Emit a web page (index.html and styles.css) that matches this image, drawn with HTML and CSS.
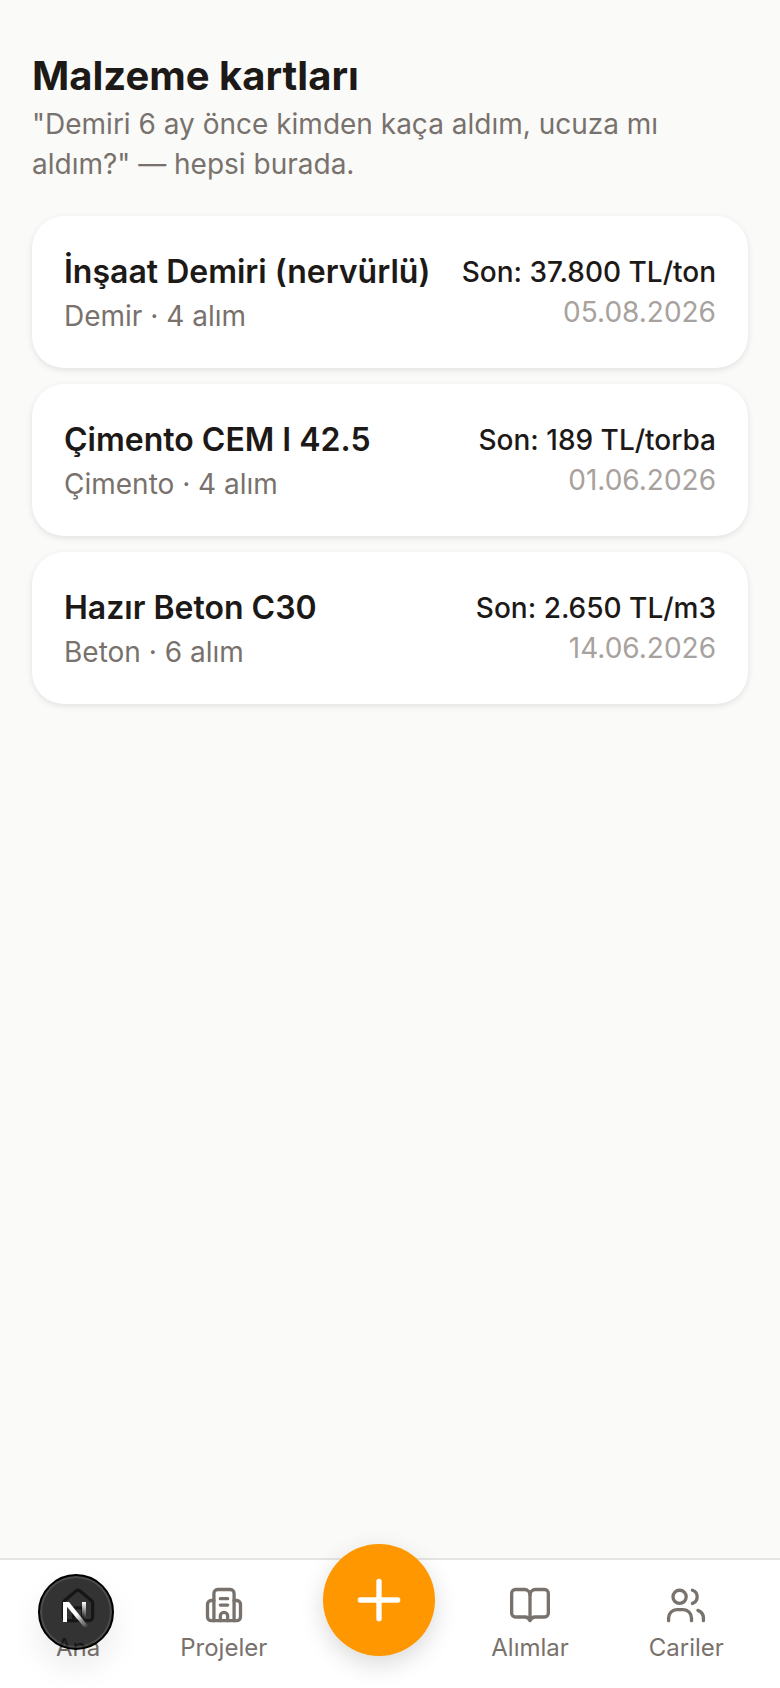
FILE: index.html
```html
<!DOCTYPE html>
<html lang="tr">
<head>
  <meta charset="UTF-8">
  <title>Malzeme kartları</title>
  <meta name="viewport" content="width=device-width, initial-scale=1.0">
  <link rel="stylesheet" href="styles.css">
</head>
<body>
<main class="page">
  <h1 class="page-title">Malzeme kartları</h1>
  <p class="page-sub">"Demiri 6 ay önce kimden kaça aldım, ucuza mı aldım?" — hepsi burada.</p>

  <div class="card-list">
    <a class="card">
      <div>
        <div class="card-name">İnşaat Demiri (nervürlü)</div>
        <div class="card-meta">Demir · 4 alım</div>
      </div>
      <div class="card-right">
        <div class="card-price">Son: 37.800 TL/ton</div>
        <div class="card-date">05.08.2026</div>
      </div>
    </a>
    <a class="card">
      <div>
        <div class="card-name">Çimento CEM I 42.5</div>
        <div class="card-meta">Çimento · 4 alım</div>
      </div>
      <div class="card-right">
        <div class="card-price">Son: 189 TL/torba</div>
        <div class="card-date">01.06.2026</div>
      </div>
    </a>
    <a class="card">
      <div>
        <div class="card-name">Hazır Beton C30</div>
        <div class="card-meta">Beton · 6 alım</div>
      </div>
      <div class="card-right">
        <div class="card-price">Son: 2.650 TL/m3</div>
        <div class="card-date">14.06.2026</div>
      </div>
    </a>
  </div>
</main>

<nav class="tabbar">
  <a class="tab">
    <svg class="tab-icon" viewBox="0 0 24 24"><path d="M4 10.5a2 2 0 0 1 .7-1.5l6-5a2 2 0 0 1 2.6 0l6 5a2 2 0 0 1 .7 1.5V18a2 2 0 0 1-2 2H6a2 2 0 0 1-2-2z"/><path d="M9.5 20v-6a1 1 0 0 1 1-1h3a1 1 0 0 1 1 1v6"/></svg>
    <span>Ana</span>
  </a>
  <a class="tab">
    <svg class="tab-icon" viewBox="0 0 24 24"><path d="M6.5 20V5a2 2 0 0 1 2-2h7a2 2 0 0 1 2 2v15"/><path d="M6.5 9H5a2 2 0 0 0-2 2v7a2 2 0 0 0 2 2h14a2 2 0 0 0 2-2v-7a2 2 0 0 0-2-2h-1.5"/><path d="M10 8h4"/><path d="M10 11.5h4"/><path d="M10 20v-2.5a2 2 0 0 1 4 0V20"/></svg>
    <span>Projeler</span>
  </a>
  <button class="fab" aria-label="Ekle">
    <svg viewBox="0 0 24 24"><path d="M5 12h14"/><path d="M12 5v14"/></svg>
  </button>
  <a class="tab">
    <svg class="tab-icon" viewBox="0 0 24 24"><path d="M12 6a3 3 0 0 1 3-3h5a2 2 0 0 1 2 2v11a2 2 0 0 1-2 2h-5a3 3 0 0 0-3 2 3 3 0 0 0-3-2H4a2 2 0 0 1-2-2V5a2 2 0 0 1 2-2h5a3 3 0 0 1 3 3z"/><path d="M12 6v13"/></svg>
    <span>Alımlar</span>
  </a>
  <a class="tab">
    <svg class="tab-icon" viewBox="0 0 24 24"><circle cx="8.5" cy="7" r="3.6"/><path d="M2.5 20v-1.5A4.5 4.5 0 0 1 7 14h3.5a4.5 4.5 0 0 1 4.5 4.5V20"/><path d="M15.5 3.4a3.8 3.8 0 0 1 0 7.2"/><path d="M18.5 14.4a4.5 4.5 0 0 1 3 4.1V20"/></svg>
    <span>Cariler</span>
  </a>
</nav>

<div class="dev-badge">
  <svg viewBox="0 0 32 32">
    <defs>
      <linearGradient id="n-diag" gradientUnits="userSpaceOnUse" x1="10" y1="10" x2="28" y2="29">
        <stop offset="0.35" stop-color="#fff"/>
        <stop offset="1" stop-color="#fff" stop-opacity="0"/>
      </linearGradient>
      <linearGradient id="n-stem" gradientUnits="userSpaceOnUse" x1="0" y1="4" x2="0" y2="20">
        <stop offset="0" stop-color="#fff"/>
        <stop offset="1" stop-color="#fff" stop-opacity="0"/>
      </linearGradient>
    </defs>
    <path fill="#fff" d="M3 4h4v20H3z"/>
    <path fill="url(#n-diag)" d="M3 4h6l20 25h-5z"/>
    <path fill="url(#n-stem)" d="M22 4h4v16h-4z"/>
  </svg>
</div>
</body>
</html>
```

FILE: styles.css
```css
* { box-sizing: border-box; }
body { margin: 0; height: 100vh; display: flex; flex-direction: column; background: #fafaf9; color: #1c1917; font-family: Inter, "Noto Sans", sans-serif; }

.page { flex: 1; padding: 48px 32px 0; }
.page-title { margin: 0; font-size: 40px; line-height: 56px; font-weight: 700; }
.page-sub { margin: 0; font-size: 28px; line-height: 40px; color: #78716c; }

.card-list { display: flex; flex-direction: column; gap: 16px; margin-top: 32px; }
.card { display: flex; justify-content: space-between; align-items: center; gap: 24px; padding: 32px; background: white; border-radius: 32px; box-shadow: 0 2px 6px rgba(0,0,0,0.1); }
.card-name { font-size: 32px; line-height: 48px; font-weight: 600; }
.card-meta { font-size: 28px; line-height: 40px; color: #78716c; }
.card-right { text-align: right; }
.card-price { font-size: 28px; line-height: 40px; font-weight: 500; }
.card-date { font-size: 28px; line-height: 40px; color: #a8a29e; }

.tabbar { display: flex; justify-content: space-evenly; align-items: flex-start; height: 130px; padding-top: 24px; background: white; border-top: 2px solid #e7e5e4; }
.tab { display: flex; flex-direction: column; align-items: center; gap: 4px; padding: 0 24px; font-size: 24px; line-height: 32px; color: #78716c; }
.tab-icon { width: 44px; height: 44px; fill: none; stroke: currentColor; stroke-width: 1.8; stroke-linecap: round; stroke-linejoin: round; }

.fab { flex: none; width: 112px; height: 112px; margin-top: -40px; padding: 0; border: none; border-radius: 50%; background: #ff9800; display: flex; align-items: center; justify-content: center; box-shadow: 0 8px 24px rgba(0,0,0,0.15); }
.fab svg { width: 64px; height: 64px; fill: none; stroke: white; stroke-width: 2; stroke-linecap: round; }

.dev-badge { position: fixed; left: 38px; top: 1574px; width: 76px; height: 76px; display: flex; align-items: center; justify-content: center; border-radius: 50%; background: rgba(0,0,0,0.8); border: 2px solid #000; box-shadow: inset 0 0 0 2px rgba(255,255,255,0.12), 0 16px 32px rgba(0,0,0,0.08); }
.dev-badge svg { width: 32px; height: 32px; margin-top: 4px; }
```
